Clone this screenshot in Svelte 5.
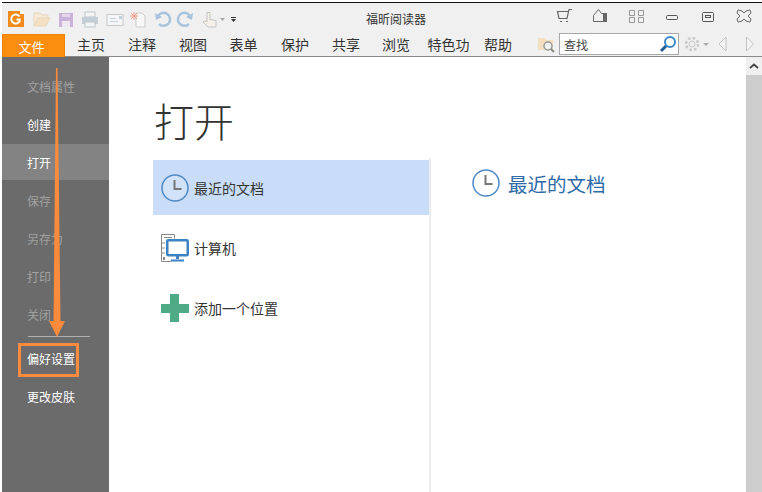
<script>
	const tabs = [
		{ label: '主页', w: 52 },
		{ label: '注释', w: 50 },
		{ label: '视图', w: 52 },
		{ label: '表单', w: 49 },
		{ label: '保护', w: 54 },
		{ label: '共享', w: 48 },
		{ label: '浏览', w: 52 },
		{ label: '特色功', w: 53 },
		{ label: '帮助', w: 46 }
	];
	const menu = [
		{ label: '文档属性', off: true },
		{ label: '创建' },
		{ label: '打开', active: true },
		{ label: '保存', off: true },
		{ label: '另存为', off: true },
		{ label: '打印', off: true },
		{ label: '关闭', off: true }
	];
</script>

<div class="window">
	<header class="chrome">
		<div class="titlebar">
			<div class="quick">
				<svg width="236" height="24" viewBox="2 3 236 24">
					<!-- logo -->
					<path d="M8 6h13l3 3v13H8z" fill="#f28a1c" />
					<path d="M20 5h1l3 3v1h-4z" fill="#fff" />
					<path d="M19.500 11.500a4.500 4.500 0 1 0 .5 4l-.5 1.500v-2.500h-3" fill="none" stroke="#fff" stroke-width="2" />
					<!-- open -->
					<path d="M34 21V8h6l2 2h6v3" fill="#f6ead6" stroke="#e8d7bb" />
					<path d="M34 21l4-8h12l-4 8z" fill="#f3e0c2" stroke="#e8d7bb" />
					<!-- save -->
					<rect x="59" y="8" width="14" height="14" fill="#c9b3d9" />
					<rect x="62" y="9" width="8" height="3" fill="#e4d9ec" />
					<rect x="62" y="16" width="8" height="6" fill="#efe8f3" />
					<!-- print -->
					<rect x="85" y="7" width="10" height="5" fill="#f4f4f4" stroke="#bcc5cc" />
					<rect x="82" y="12" width="16" height="7" fill="#c4ced6" />
					<rect x="85" y="17" width="10" height="5" fill="#f4f4f4" stroke="#bcc5cc" />
					<!-- mail -->
					<rect x="107" y="9.500" width="16" height="11" fill="#f6f6f6" stroke="#c8c8c8" />
					<path d="M110 13.500h6M110 16.500h8" stroke="#c5d2da" />
					<rect x="119" y="11" width="3" height="3" fill="#c5d2da" />
					<!-- new -->
					<path d="M136 8h6l3 3v11h-9z" fill="#f8f8f8" stroke="#cdcdcd" />
					<path d="M134 7v8M130 11h8M131 8l6 6M137 8l-6 6" stroke="#f0a090" />
					<!-- undo redo -->
					<path d="M158 11a6.500 6.500 0 1 1 1 8" fill="none" stroke="#a9c4dc" stroke-width="2.500" />
					<path d="M155 8l1 7 6-3z" fill="#a9c4dc" />
					<path d="M190 11a6.500 6.500 0 1 0-1 8" fill="none" stroke="#a9c4dc" stroke-width="2.500" />
					<path d="M193 8l-1 7-6-3z" fill="#a9c4dc" />
					<!-- hand -->
					<path d="M207 7.500h3v7l6 1v6.500h-8l-5-5 2-1 2 1z" fill="#f6f1e8" stroke="#c4c4c4" />
					<path d="M220 13h5l-2.500 3z" fill="#a8a8a8" />
					<path d="M231 12h5v1h-5zM231 14h5l-2.500 3z" fill="#333" />
				</svg>
			</div>
			<div class="title">福昕阅读器</div>
			<div class="winbtns">
				<svg width="210" height="24" viewBox="0 0 210 24">
					<!-- cart -->
					<path d="M46 2.500h-3l-2 9H33l-1.500-7H43M34 14.500h2M40 14.500h2" fill="none" stroke="#666" stroke-width="1.200" />
					<!-- skin -->
					<path d="M67.500 14.500v-6l5-6 3 4h5v8z" fill="none" stroke="#666" />
					<rect x="77" y="6" width="4" height="9" fill="#666" />
					<!-- fullscreen -->
					<path d="M103.500 3.500h5v5h-5zM112.500 3.500h5v5h-5zM103.500 10.500h5v5h-5zM112.500 10.500h5v5h-5z" fill="none" stroke="#999" />
					<!-- min max -->
					<rect x="140.500" y="8.500" width="11" height="4" rx="1" fill="none" stroke="#555" />
					<rect x="176.500" y="5.500" width="11" height="9" rx="1" fill="none" stroke="#555" />
					<rect x="179.500" y="8.500" width="5" height="2" fill="none" stroke="#555" />
				</svg>
				<svg width="16" height="14" viewBox="0 0 16 14" class="close">
					<path d="M2 1l4 1 2 2 2-2 4-1 1 3-3 3 3 3-1 3-4-1-2-2-2 2-4 1-1-3 3-3-3-3z" fill="none" stroke="#666" />
				</svg>
			</div>
		</div>
		<nav class="tabs">
			<div class="file">文件</div>
			{#each tabs as t}
				<div class="tab" style="width: {t.w}px">{t.label}</div>
			{/each}
			<div class="tools">
				<svg width="22" height="18" viewBox="0 0 22 18">
					<path d="M2 15V3h6l2 2h7v10z" fill="#f4dfc0" />
					<circle cx="12" cy="11" r="4" fill="#f2f2f2" stroke="#999" stroke-width="1.500" />
					<path d="M15 14l3 3" stroke="#888" stroke-width="2" />
				</svg>
				<div class="search">
					<span>查找</span>
					<svg width="18" height="18" viewBox="0 0 18 18">
						<circle cx="11" cy="7" r="5" fill="#fff" stroke="#3a87c8" stroke-width="2" />
						<path d="M7 11l-5 5" stroke="#1f5f99" stroke-width="3" />
					</svg>
				</div>
				<svg width="72" height="18" viewBox="0 0 72 18">
					<circle cx="9" cy="9" r="3" fill="none" stroke="#c8c8c8" />
					<circle cx="9" cy="9" r="6" fill="none" stroke="#c8c8c8" stroke-width="2.500" stroke-dasharray="2.500 2.200" />
					<path d="M20 8h6l-3 3z" fill="#aaa" />
					<path d="M43 2l-7 7 7 7z" fill="#f4f4f4" stroke="#c4c4c4" />
					<path d="M63.500 2l7 7-7 7z" fill="#f4f4f4" stroke="#c4c4c4" />
				</svg>
			</div>
		</nav>
	</header>

	<div class="body">
		<aside class="side">
			{#each menu as m}
				<div class="item" class:off={m.off} class:active={m.active}>{m.label}</div>
			{/each}
			<div class="rule"></div>
			<div class="item pref"><span>偏好设置</span></div>
			<div class="item">更改皮肤</div>
			<svg class="arrow" width="17" height="270" viewBox="0 0 17 270">
				<path d="M7 0L8.500 0L11.500 253H16L8 269L0 253H4.500z" fill="#fb8b3c" />
			</svg>
		</aside>

		<main class="main">
			<h1>打开</h1>
			<div class="columns">
				<div class="places">
					<div class="place current">
						<svg width="30" height="30" viewBox="0 0 30 30">
							<circle cx="15" cy="15" r="13" fill="#fff" fill-opacity=".15" stroke="#4f8ac6" stroke-width="1.500" />
							<path d="M14.500 7v9h7" fill="none" stroke="#777" stroke-width="2" />
						</svg>
						<span>最近的文档</span>
					</div>
					<div class="place">
						<svg width="30" height="30" viewBox="0 0 30 30">
							<path d="M1.500 1.500h13v4M1.500 1.500v27h10M4 4.500h8M2 10h3M2 15h3M2 20h3" fill="none" stroke="#888" />
							<rect x="3" y="24" width="2" height="3" fill="#888" />
							<rect x="7.250" y="7.250" width="20.500" height="15" rx="1" fill="#fff" stroke="#3f82c4" stroke-width="2.500" />
							<path d="M16 23h3v3h-3zM11 26.500h13v2H11z" fill="#3f82c4" />
						</svg>
						<span>计算机</span>
					</div>
					<div class="place">
						<svg width="30" height="30" viewBox="0 0 30 30">
							<path d="M10 1h9v10h10v9H19v9h-9V20H1v-9h9z" fill="#4fab85" />
						</svg>
						<span>添加一个位置</span>
					</div>
				</div>
				<div class="recent">
					<svg width="30" height="30" viewBox="0 0 30 30">
						<circle cx="15" cy="15" r="13" fill="none" stroke="#4f8ac6" stroke-width="1.500" />
						<path d="M14.500 7v9h7" fill="none" stroke="#777" stroke-width="2" />
					</svg>
					<span>最近的文档</span>
				</div>
			</div>
		</main>

		<div class="scroll">
			<div class="up">
				<svg width="10" height="7" viewBox="0 0 10 7"><path d="M1 5l4-3.500L9 5" fill="none" stroke="#444" stroke-width="1.800" /></svg>
			</div>
			<div class="thumb"></div>
		</div>
	</div>
</div>

<style>
	:global(body) {
		margin: 0;
		background: #fff;
	}
	.window {
		width: 762px;
		height: 492px;
		box-sizing: border-box;
		padding-left: 2px;
		padding-top: 2px;
		display: flex;
		flex-direction: column;
		overflow: hidden;
		font-family: "Noto Sans CJK SC", "Liberation Sans", sans-serif;
	}
	.chrome {
		height: 55px;
		flex: none;
		box-sizing: border-box;
		background: #f0f0f0;
		border-top: 1px solid #111;
		border-bottom: 1px solid #8a8a8a;
		display: flex;
		flex-direction: column;
	}
	.titlebar {
		height: 30px;
		flex: none;
		display: flex;
		align-items: center;
		position: relative;
	}
	.quick {
		padding-top: 4px;
		height: 24px;
	}
	.title {
		position: absolute;
		left: 364px;
		top: 7px;
		font-size: 12px;
		line-height: 18px;
		color: #333;
	}
	.winbtns {
		margin-left: auto;
		display: flex;
		align-items: center;
		padding-top: 2px;
		padding-right: 10px;
	}
	.close {
		margin-top: -6px;
	}
	.tabs {
		flex: 1;
		display: flex;
		align-items: center;
		font-size: 14px;
		color: #333;
	}
	.file {
		width: 63px;
		height: 24px;
		margin-top: 1px;
		align-self: flex-start;
		box-sizing: border-box;
		background: #fb8d0f;
		border: 1px solid #f08000;
		border-bottom: 0;
		color: #fff;
		font-size: 13px;
		line-height: 23px;
		text-align: center;
		padding-right: 4px;
	}
	.tab {
		text-align: center;
		line-height: 22px;
		padding-bottom: 3px;
	}
	.tools {
		margin-left: auto;
		display: flex;
		align-items: center;
		padding-bottom: 3px;
		padding-right: 7px;
		gap: 1px;
	}
	.search {
		width: 120px;
		height: 22px;
		box-sizing: border-box;
		border: 1px solid #a8a8a8;
		background: #fff;
		display: flex;
		align-items: center;
		justify-content: space-between;
		padding: 0 1px 0 4px;
		font-size: 12px;
		color: #444;
		margin-right: 3px;
	}
	.body {
		flex: 1;
		display: flex;
		min-height: 0;
	}
	.side {
		width: 107px;
		flex: none;
		background: #6b6b6b;
		padding-top: 10px;
		position: relative;
	}
	.item {
		height: 38px;
		display: flex;
		align-items: center;
		padding-left: 25px;
		font-size: 12px;
		color: #fff;
	}
	.item.off {
		color: #a0a0a0;
	}
	.item.active {
		background: #838383;
		height: 36px;
		margin: 1px 0;
	}
	.rule {
		height: 1px;
		background: #b0b0b0;
		margin: 3px 19px 6px 26px;
	}
	.pref {
		height: 34px;
		padding-left: 16px;
	}
	.pref span {
		border: 3px solid #fb8b3c;
		padding: 4px 1px 6px 6px;
		line-height: 18px;
	}
	.arrow {
		position: absolute;
		left: 47px;
		top: 11px;
	}
	.main {
		flex: 1;
		min-width: 0;
		display: flex;
		flex-direction: column;
		padding-left: 44px;
	}
	h1 {
		margin: 35px 0 0 1px;
		height: 66px;
		font-family: "Noto Sans CJK SC", "Liberation Sans", sans-serif;
		font-weight: 300;
		font-size: 40px;
		line-height: 56px;
		color: #333;
	}
	.columns {
		flex: 1;
		display: flex;
	}
	.places {
		width: 276px;
		flex: none;
		padding-top: 2px;
		border-right: 2px solid #ececec;
		display: flex;
		flex-direction: column;
	}
	.place {
		height: 55px;
		flex: none;
		display: flex;
		align-items: center;
		padding-left: 7px;
		gap: 4px;
		font-size: 14px;
		color: #333;
		margin-bottom: 5px;
	}
	.place.current {
		background: #c9ddf8;
	}
	.recent {
		display: flex;
		align-items: center;
		align-self: flex-start;
		margin: 10px 0 0 40px;
		gap: 7px;
		font-size: 19.500px;
		color: #2f6aa8;
	}
	.scroll {
		width: 16px;
		flex: none;
		background: #f0f0f0;
		display: flex;
		flex-direction: column;
	}
	.up {
		height: 18px;
		display: flex;
		align-items: center;
		justify-content: center;
	}
	.thumb {
		flex: 1;
		background: #cdcdcd;
	}
</style>
